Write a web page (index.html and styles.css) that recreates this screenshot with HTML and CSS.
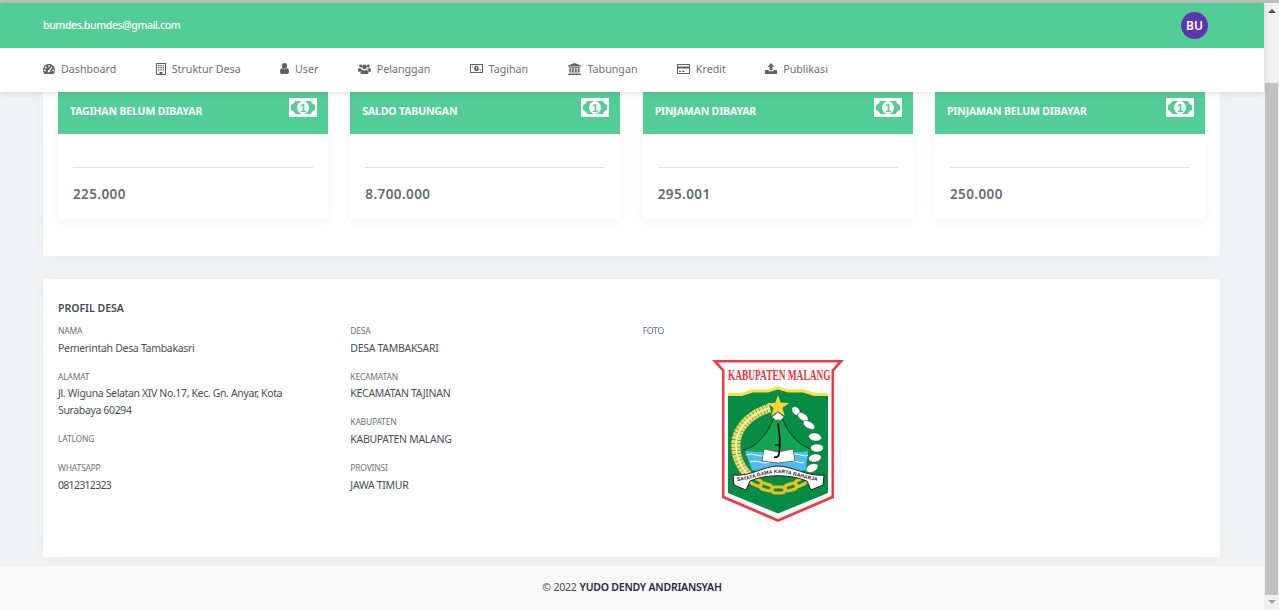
FILE: index.html
```html
<!DOCTYPE html>
<html lang="id">
<head>
<meta charset="utf-8">
<title>Profil Desa</title>
<link rel="stylesheet" href="styles.css">
</head>
<body>
<div class="topline"></div>
<div class="window">
  <div class="page">
    <header class="header">
      <div class="bar">
        <span class="email">bumdes.bumdes@gmail.com</span>
        <span class="avatar">BU</span>
      </div>
      <nav class="nav">
        <a class="nav-item"><svg class="ic ic-dash" viewBox="0 0 12 10"><path fill-rule="evenodd" d="M6 0C2.700 0 0 2.600 0 6C0 7.300.4 8.600 1.100 9.600C1.200 9.800 1.400 10 1.700 10H10.300C10.600 10 10.800 9.800 10.900 9.600C11.600 8.600 12 7.300 12 6C12 2.600 9.300 0 6 0ZM6 1.200A.9.900 0 1 1 6 3A.9.900 0 1 1 6 1.200ZM2.800 2.600A.9.900 0 1 1 2.800 4.400A.9.900 0 1 1 2.800 2.600ZM1.700 5.500A.9.900 0 1 1 1.700 7.300A.9.900 0 1 1 1.700 5.500ZM10.300 5.500A.9.900 0 1 1 10.300 7.300A.9.900 0 1 1 10.300 5.500ZM8.600 2.500L9.400 3L7.100 6.600C7.400 7.200 7.200 8 6.600 8.300C5.900 8.600 5.200 8.400 4.900 7.800C4.600 7.200 4.800 6.400 5.400 6.100C5.600 6 5.800 5.900 6 5.900Z"/></svg>Dashboard</a>
        <a class="nav-item"><svg class="ic ic-build" viewBox="0 0 10 12"><path fill-rule="evenodd" d="M0 0H10V12H0ZM1 1V11H3.500V9H6.500V11H9V1Z"/><path d="M2 2H3.500V3.200H2ZM4.300 2H5.800V3.200H4.300ZM6.600 2H8V3.200H6.600ZM2 4.100H3.500V5.300H2ZM4.300 4.100H5.800V5.300H4.300ZM6.600 4.100H8V5.300H6.600ZM2 6.200H3.500V7.400H2ZM4.300 6.200H5.800V7.400H4.300ZM6.600 6.200H8V7.400H6.600Z"/></svg>Struktur Desa</a>
        <a class="nav-item"><svg class="ic ic-user" viewBox="0 0 9 11"><ellipse cx="4.500" cy="2.900" rx="2.600" ry="2.900"/><path d="M2 5.300C2.700 6 3.500 6.300 4.500 6.300C5.500 6.300 6.300 6 7 5.300C8.300 5.500 9 6.600 9 9C9 10.300 8.200 11 7.200 11H1.800C.8 11 0 10.300 0 9C0 6.600.7 5.500 2 5.300Z"/></svg>User</a>
        <a class="nav-item"><svg class="ic ic-users" viewBox="0 0 13 10"><circle cx="2.700" cy="2" r="1.600"/><circle cx="10.300" cy="2" r="1.600"/><circle cx="6.500" cy="2.900" r="2.300"/><path d="M0 7C0 5.300.3 4 1.400 4C2 4.500 2.500 4.600 3.200 4.500C3.300 5.300 3.600 5.900 4.100 6.400C3.100 6.600 2.500 7 2.200 7.800H.8C.3 7.800 0 7.500 0 7ZM13 7C13 5.300 12.700 4 11.600 4C11 4.500 10.500 4.600 9.800 4.500C9.700 5.300 9.400 5.900 8.900 6.400C9.900 6.600 10.500 7 10.800 7.800H12.200C12.700 7.800 13 7.500 13 7ZM4.200 5.700C4.800 6.300 5.600 6.500 6.500 6.500C7.400 6.500 8.200 6.300 8.800 5.700C10 5.900 10.500 7 10.500 8.500C10.500 9.400 10 10 9.200 10H3.800C3 10 2.500 9.400 2.500 8.500C2.500 7 3 5.900 4.200 5.700Z"/></svg>Pelanggan</a>
        <a class="nav-item"><svg class="ic ic-cash" viewBox="0 0 13 9"><path fill-rule="evenodd" d="M0 0H13V9H0ZM1 1V8H12V1Z"/><path fill-rule="evenodd" d="M6.500 1.800C7.900 1.800 8.900 3 8.900 4.500C8.900 6 7.900 7.200 6.500 7.200C5.100 7.200 4.100 6 4.100 4.500C4.100 3 5.100 1.800 6.500 1.800ZM6 3V3.700H6.400V5.500H7.100V3Z"/><path d="M2 2.500H3V3.500H2ZM10 5.500H11V6.500H10Z"/></svg>Tagihan</a>
        <a class="nav-item"><svg class="ic ic-bank" viewBox="0 0 13 12"><path d="M6.500 0L13 2.600V3.400H0V2.600ZM1 4H12V4.700H1ZM1.500 5.200H3.300V9.200H1.500ZM4.100 5.200H5.900V9.200H4.100ZM6.900 5.200H8.700V9.200H6.900ZM9.700 5.200H11.500V9.200H9.700ZM1 9.700H12V10.500H1ZM0 11H13V12H0Z"/></svg>Tabungan</a>
        <a class="nav-item"><svg class="ic ic-card" viewBox="0 0 13 10"><path fill-rule="evenodd" d="M1 0H12C12.600 0 13 .4 13 1V9C13 9.600 12.600 10 12 10H1C.4 10 0 9.600 0 9V1C0 .4.400 0 1 0ZM1 1V2.600H12V1ZM1 4.500V9H12V4.500ZM2 7H4V8H2ZM5 7H7.500V8H5Z"/></svg>Kredit</a>
        <a class="nav-item"><svg class="ic ic-up" viewBox="0 0 12 11"><path d="M6 0L9.500 3.700H7.400V7.300H4.600V3.700H2.500ZM0 7H3.600V8.300H8.400V7H12V11H0Z"/></svg>Publikasi</a>
      </nav>
    </header>

    <main class="main">
      <section class="panel panel-stats">
        <div class="grid">
          <article class="card">
            <div class="card-head"><span>TAGIHAN BELUM DIBAYAR</span><svg class="money" viewBox="0 0 28 19"><rect width="28" height="19" fill="#fff"/><path class="money-bg" d="M6 3H22C22.500 5 24 6.500 26 7V12C24 12.500 22.500 14 22 16H6C5.500 14 4 12.500 2 12V7C4 6.500 5.500 5 6 3Z"/><ellipse cx="14" cy="9.500" rx="6" ry="6.500" fill="#fff"/><text x="14" y="13.500" text-anchor="middle" class="money-one">1</text></svg></div>
            <div class="card-body"><hr class="rule"><div class="amount">225.000</div></div>
          </article>
          <article class="card">
            <div class="card-head"><span>SALDO TABUNGAN</span><svg class="money" viewBox="0 0 28 19"><rect width="28" height="19" fill="#fff"/><path class="money-bg" d="M6 3H22C22.500 5 24 6.500 26 7V12C24 12.500 22.500 14 22 16H6C5.500 14 4 12.500 2 12V7C4 6.500 5.500 5 6 3Z"/><ellipse cx="14" cy="9.500" rx="6" ry="6.500" fill="#fff"/><text x="14" y="13.500" text-anchor="middle" class="money-one">1</text></svg></div>
            <div class="card-body"><hr class="rule"><div class="amount">8.700.000</div></div>
          </article>
          <article class="card">
            <div class="card-head"><span>PINJAMAN DIBAYAR</span><svg class="money" viewBox="0 0 28 19"><rect width="28" height="19" fill="#fff"/><path class="money-bg" d="M6 3H22C22.500 5 24 6.500 26 7V12C24 12.500 22.500 14 22 16H6C5.500 14 4 12.500 2 12V7C4 6.500 5.500 5 6 3Z"/><ellipse cx="14" cy="9.500" rx="6" ry="6.500" fill="#fff"/><text x="14" y="13.500" text-anchor="middle" class="money-one">1</text></svg></div>
            <div class="card-body"><hr class="rule"><div class="amount">295.001</div></div>
          </article>
          <article class="card">
            <div class="card-head"><span>PINJAMAN BELUM DIBAYAR</span><svg class="money" viewBox="0 0 28 19"><rect width="28" height="19" fill="#fff"/><path class="money-bg" d="M6 3H22C22.500 5 24 6.500 26 7V12C24 12.500 22.500 14 22 16H6C5.500 14 4 12.500 2 12V7C4 6.500 5.500 5 6 3Z"/><ellipse cx="14" cy="9.500" rx="6" ry="6.500" fill="#fff"/><text x="14" y="13.500" text-anchor="middle" class="money-one">1</text></svg></div>
            <div class="card-body"><hr class="rule"><div class="amount">250.000</div></div>
          </article>
        </div>
      </section>

      <section class="panel panel-profile">
        <h2 class="profile-title">PROFIL DESA</h2>
        <div class="grid">
          <div class="col">
            <div class="field"><div class="label">NAMA</div><div class="value">Pemerintah Desa Tambakasri</div></div>
            <div class="field"><div class="label">ALAMAT</div><div class="value value-tight">Jl. Wiguna Selatan XIV No.17, Kec. Gn. Anyar, Kota Surabaya 60294</div></div>
            <div class="field"><div class="label">LATLONG</div></div>
            <div class="field"><div class="label">WHATSAPP</div><div class="value value-phone">0812312323</div></div>
          </div>
          <div class="col">
            <div class="field"><div class="label">DESA</div><div class="value">DESA TAMBAKSARI</div></div>
            <div class="field"><div class="label">KECAMATAN</div><div class="value">KECAMATAN TAJINAN</div></div>
            <div class="field"><div class="label">KABUPATEN</div><div class="value">KABUPATEN MALANG</div></div>
            <div class="field"><div class="label">PROVINSI</div><div class="value">JAWA TIMUR</div></div>
          </div>
          <div class="col">
            <div class="label label-foto">FOTO</div>
            <svg class="emblem" viewBox="0 0 170 180" role="img" aria-label="Lambang Kabupaten Malang">
              <path d="M22 10H154L144 21V148L88 172L32 148V21Z" fill="#ef3b47"/>
              <path d="M28 12.500H148L141.500 20V146L88 169L34.500 146V20Z" fill="#fff"/>
              <text transform="translate(38 30) scale(.625 1)" class="emblem-title">KABUPATEN MALANG</text>
              <path d="M38 43L51 43L62 39.500L78 39.500L88 36.500L98 39.500L114 39.500L125 43L138 43V47H38Z" fill="#f6df3f"/>
              <path d="M38 46L52 46L63 42.500L78 42.500L88 39.500L98 42.500L113 42.500L124 46L138 46V143L88 163.500L38 143Z" fill="#078c45"/>
              <path d="M55 101H118L116 120L90 126L62 120Z" fill="#4fbdf0"/>
              <path d="M56 105Q61 103 66 105T75 105M101 105Q106 103 111 105T118 105M60 112Q65 110 70 112T80 112M98 112Q103 110 108 112T114 112" fill="none" stroke="#fff" stroke-width="1"/>
              <path d="M53 100C68 97 78 82 84 68H92C98 82 108 97 125 100L112 102H64Z" fill="#12a653"/>
              <path d="M53 100C68 97 78 82 84 68M92 68C98 82 108 97 125 100" fill="none" stroke="#10301f" stroke-width="1"/>
              <path d="M82 67L88 62L94 67L91 70H85Z" fill="#fff" stroke="#444" stroke-width=".5"/>
              <path d="M88 45L90.700 52.800L99 53L92.400 58L94.800 66L88 61.300L81.200 66L83.600 58L77 53L85.300 52.800Z" fill="#f8d435"/>
              <path d="M74 99L88 102L103 99L105 111L88 113L72 111Z" fill="#fff" stroke="#555" stroke-width=".8"/>
              <path d="M88 73L89.800 88V96L89 104Q88 108 84 107" fill="none" stroke="#111" stroke-width="1.800"/>
              <path d="M85 95H91" stroke="#111" stroke-width="1.500"/>
              <path d="M80 58C62 63 48 76 46 92C45 106 50 116 58 125" fill="none" stroke="#f1d964" stroke-width="9" stroke-dasharray="3 .5"/>
              <path d="M80 58C62 63 48 76 46 92C45 106 50 116 58 125" fill="none" stroke="#fff6c4" stroke-width="1.500"/>
              <g fill="#fff" stroke="#0a5f33" stroke-width=".5">
                <ellipse cx="106" cy="61" rx="5" ry="3.500" transform="rotate(50 106 61)"/>
                <ellipse cx="113" cy="67" rx="6" ry="3.500" transform="rotate(35 113 67)"/>
                <ellipse cx="119" cy="75" rx="6.500" ry="3.500" transform="rotate(30 119 75)"/>
                <ellipse cx="125" cy="87" rx="6.500" ry="4" transform="rotate(10 125 87)"/>
                <ellipse cx="127" cy="98" rx="6.500" ry="4"/>
                <ellipse cx="125" cy="108" rx="6.500" ry="4" transform="rotate(-10 125 108)"/>
                <ellipse cx="122" cy="118" rx="6.500" ry="4" transform="rotate(-25 122 118)"/>
              </g>
              <g fill="none" stroke="#e6c121" stroke-width="3.200">
                <rect x="60" y="129" width="12" height="6" rx="3" transform="rotate(25 66 132)"/>
                <rect x="70" y="134" width="12" height="6" rx="3" transform="rotate(15 76 137)"/>
                <rect x="82" y="137" width="13" height="6" rx="3"/>
                <rect x="95" y="134" width="12" height="6" rx="3" transform="rotate(-15 101 137)"/>
                <rect x="105" y="129" width="12" height="6" rx="3" transform="rotate(-25 111 132)"/>
              </g>
              <path d="M43 125C60 127 74 116 88 116C102 116 118 127 134 125L133 135L121 140L117 131C100 124 76 124 60 131L56 140L44 135Z" fill="#fff" stroke="#222" stroke-width="1"/>
              <path id="ribbon-line" d="M47 131C62 130 75 123 88 123C101 123 115 130 130 131" fill="none"/>
              <text class="emblem-motto"><textPath href="#ribbon-line" textLength="82">SATATA GAMA KARTA RAHARJA</textPath></text>
            </svg>
          </div>
        </div>
      </section>
    </main>

    <footer class="footer">© 2022 <strong>YUDO DENDY ANDRIANSYAH</strong></footer>
  </div>

  <div class="scrollbar">
    <span class="arrow arrow-up"></span>
    <span class="thumb"></span>
    <span class="arrow arrow-down"></span>
  </div>
</div>
</body>
</html>
```

FILE: styles.css
```css
* { box-sizing: border-box; }

html, body {
  margin: 0;
  height: 100%;
  overflow: hidden;
}

body {
  display: flex;
  flex-direction: column;
  font-family: "Noto Sans", "Open Sans", sans-serif;
  font-size: 10.500px;
  color: #4a4f57;
  background: #f1f1f1;
}

.topline {
  height: 3px;
  flex: none;
  background: #bdbdbd;
}

.window {
  flex: 1;
  min-height: 0;
  display: flex;
}

.page {
  flex: 1;
  min-width: 0;
  display: flex;
  flex-direction: column;
  background: #eff3f6;
}

/* Header */
.header {
  flex: none;
  position: relative;
  z-index: 2;
  box-shadow: 0 1px 6px rgba(0, 0, 0, .12);
}

.bar {
  height: 45px;
  padding: 0 56px 0 43px;
  display: flex;
  align-items: center;
  justify-content: space-between;
  background: #53cd96;
  color: #fff;
}

.email {
  padding-bottom: 2px;
  font-size: 10.500px;
  letter-spacing: -.38px;
  font-weight: 500;
}

.avatar {
  width: 27px;
  height: 27px;
  border-radius: 50%;
  display: flex;
  align-items: center;
  justify-content: center;
  background: #5e35b1;
  color: #fff;
  font-size: 12px;
  font-weight: 600;
}

.nav {
  height: 44px;
  padding: 0 43px 3px;
  display: flex;
  align-items: center;
  gap: 39.300px;
  background: #fff;
}

.nav-item {
  display: flex;
  align-items: center;
  color: #6c7177;
  font-size: 10.700px;
  white-space: nowrap;
}

.ic {
  flex: none;
  fill: #5f6368;
}
.ic-dash { width: 12px; height: 10px; margin-right: 6px; }
.ic-build { width: 10px; height: 12px; margin-right: 6px; }
.ic-user { width: 9px; height: 11px; margin-right: 6px; }
.ic-users { width: 13px; height: 10px; margin-right: 6px; }
.ic-cash { width: 13px; height: 9px; margin-right: 6px; }
.ic-bank { width: 13px; height: 12px; margin-right: 7px; }
.ic-card { width: 13px; height: 10px; margin-right: 6px; }
.ic-up { width: 12px; height: 11px; margin-right: 6px; }

/* Main */
.main {
  flex: 1;
  min-height: 0;
  overflow: hidden;
  padding: 0 44px 8px 43px;
  display: flex;
  flex-direction: column;
  gap: 23px;
}

.panel {
  background: #fff;
  border-radius: 3px;
  padding: 0 15px;
  box-shadow: 0 0 12px rgba(140, 150, 165, .06);
}

.panel-stats { height: 164px; flex: none; }
.panel-profile { height: 278px; flex: none; }

.grid {
  display: grid;
  grid-template-columns: repeat(4, 270px);
  column-gap: 22.330px;
}

.card {
  height: 127px;
  background: #fff;
  border-radius: 0 0 3px 3px;
  box-shadow: 0 3px 14px rgba(120, 130, 145, .09);
}

.card-head {
  height: 42px;
  padding: 6px 11px 0 12px;
  display: flex;
  align-items: flex-start;
  justify-content: space-between;
  background: #53cd96;
  color: #fff;
  font-size: 10.500px;
  letter-spacing: -.15px;
  font-weight: 700;
}

.card-head span { line-height: 26px; }

.money {
  width: 28px;
  height: 19px;
  flex: none;
}

.money-bg { fill: #53cd96; }

.money-one {
  font-family: "Liberation Sans", sans-serif;
  font-size: 11px;
  font-weight: 700;
  fill: #53cd96;
}

.card-body { padding: 33px 15px 0; }

.rule {
  margin: 0;
  border: 0;
  border-top: 1px solid #e1e3e5;
}

.amount {
  margin-top: 16px;
  font-size: 13.500px;
  letter-spacing: .4px;
  line-height: 20px;
  font-weight: 600;
  color: #666b70;
}

/* Profile */
.panel-profile { padding-top: 21px; }

.profile-title {
  margin: 0 0 7px;
  font-size: 10.500px;
  line-height: 16px;
  font-weight: 600;
  color: #454a52;
}

.field { margin-bottom: 12px; }

.label {
  font-size: 8.500px;
  letter-spacing: -.2px;
  line-height: 16.800px;
  color: #6d737b;
}

.label-foto { color: #5a6f96; }

.value {
  font-size: 10.500px;
  letter-spacing: -.3px;
  line-height: 16.800px;
  color: #4a4f57;
}

.value-tight {
  padding-right: 30px;
  letter-spacing: -.36px;
}

.value-phone { letter-spacing: -.7px; }

.emblem {
  display: block;
  width: 170px;
  height: 180px;
  margin: 10px 0 0 47px;
}

.emblem-title {
  font-family: "Liberation Serif", serif;
  font-size: 15px;
  font-weight: 700;
  fill: #e8323f;
}

.emblem-motto {
  font-family: "Liberation Sans", sans-serif;
  font-size: 5px;
  font-weight: 700;
  fill: #222;
}

/* Footer */
.footer {
  height: 45px;
  padding-bottom: 3px;
  flex: none;
  display: flex;
  align-items: center;
  justify-content: center;
  gap: 3px;
  background: #f9f9f9;
  border-top: 1px solid #eceef0;
  font-size: 10.500px;
  letter-spacing: -.22px;
  color: #4a4f57;
}

.footer strong {
  font-weight: 600;
  color: #1f2a44;
}

/* Scrollbar */
.scrollbar {
  width: 15px;
  flex: none;
  display: flex;
  flex-direction: column;
  align-items: center;
  background: #f1f1f1;
}

.thumb {
  width: 13px;
  height: 512px;
  margin: 70px 0 0;
  background: #c1c1c1;
}

.arrow {
  width: 0;
  height: 0;
  border-left: 4px solid transparent;
  border-right: 4px solid transparent;
}

.arrow-up {
  margin-top: 6px;
  border-bottom: 4px solid #505050;
}

.arrow-down {
  margin-top: 5px;
  border-top: 4px solid #a3a3a3;
}
```
